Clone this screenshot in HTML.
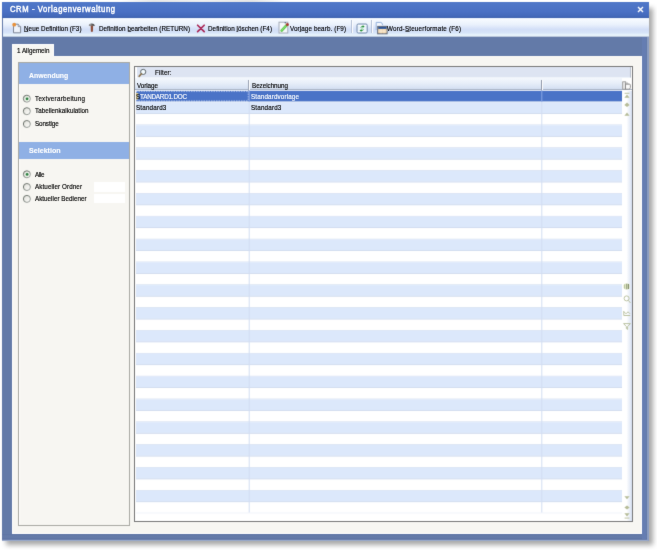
<!DOCTYPE html>
<html><head><meta charset="utf-8">
<style>
html,body{margin:0;padding:0;width:657px;height:550px;overflow:hidden;background:#fff;}
body{position:relative;font-family:"Liberation Sans",sans-serif;}
div,span,svg{position:absolute;box-sizing:border-box;}
.t{white-space:nowrap;font-size:7.3px;line-height:7px;color:#000;transform-origin:0 0;-webkit-text-stroke:.16px #000;}
.w{color:#fff;-webkit-text-stroke:.15px #fff;}
.u{position:static;}
.rb{width:8px;height:8px;border-radius:50%;border:1px solid #8c928c;background:linear-gradient(135deg,#dcdcd6,#f4f4f0 60%,#fff);}
.dot{width:3.2px;height:3.2px;border-radius:50%;background:#358a46;box-shadow:0 0 1px #8cc898;}
</style></head><body><svg width="0" height="0" style="position:absolute"><filter id="soft" x="0" y="0" width="100%" height="100%" color-interpolation-filters="sRGB"><feConvolveMatrix order="3" kernelMatrix="0.01 0.08 0.01 0.08 0.64 0.08 0.01 0.08 0.01" edgeMode="duplicate"/></filter><filter id="soft2" x="0" y="0" width="100%" height="100%" color-interpolation-filters="sRGB"><feConvolveMatrix order="3" kernelMatrix="0.005 0.05 0.005 0.05 0.78 0.05 0.005 0.05 0.005" edgeMode="duplicate"/></filter></svg><div id="root" style="left:0;top:0;width:657px;height:550px;filter:url(#soft);">

<!-- drop shadow -->
<div style="left:6px;top:7.5px;width:646.5px;height:537.5px;background:#606060;filter:blur(2.6px);opacity:.55"></div>
<div style="left:120px;top:0;width:166px;height:2px;background:linear-gradient(90deg,#fff,#e8e8e8 20%,#f0f0f0 50%,#e6e6e6 80%,#fff);"></div>

<!-- window frame -->
<div style="left:2px;top:2px;width:646.6px;height:539.4px;background:#637aa8;border-right:2px solid #8a9cc2;border-bottom:1.5px solid #9aaaca;"></div>
<div style="left:2px;top:534px;width:644.6px;height:6px;background:linear-gradient(#5c73a4,#657ba9 30%,#647aa8 65%,#5a70a2 85%,#7f92bb);"></div>
<div style="left:642.3px;top:37px;width:4px;height:502px;background:#657db2;"></div>

<!-- title bar -->
<div style="left:2px;top:2px;width:646.6px;height:16px;background:linear-gradient(#5078c8,#4a70c4 60%,#4469ba 88%,#3d60ac);"></div>
<svg style="left:637px;top:6px" width="7" height="7" viewBox="0 0 7 7"><path d="M1 1 L6 6 M6 1 L1 6" stroke="#fff" stroke-width="1.4"/></svg>

<!-- toolbar -->
<div style="left:3px;top:18px;width:645.6px;height:19.4px;background:linear-gradient(#e8f0fc 0%,#f6faff 8%,#eaf1fc 35%,#d2def7 60%,#d6e4f8 78%,#eaf6fc 90%,#e4eef8 96%,#6f80a8 100%);"></div>

<!-- toolbar icons -->
<svg style="left:12px;top:22px" width="10" height="12" viewBox="0 0 10 12">
  <path d="M1.5 2.2 H6.2 L8.6 4.6 V10.8 H1.5 Z" fill="#eef3fb" stroke="#7f8796" stroke-width="1"/>
  <path d="M6.2 2.2 V4.6 H8.6" fill="#dfe6f2" stroke="#7f8796" stroke-width=".8"/>
  <circle cx="2.2" cy="2.7" r="1.9" fill="#e8913a"/>
</svg>
<svg style="left:88px;top:22.8px" width="8" height="10" viewBox="0 0 8 10">
  <path d="M0.9 2.2 Q1.4 0.6 3.8 0.6 Q6.4 0.6 6.8 2.4 L6.6 3.1 Q4 2.5 0.9 2.8 Z" fill="#555"/>
  <path d="M0.9 2.2 Q1.4 0.8 3.4 0.8 L3.4 2.6 Q2 2.6 0.9 2.8 Z" fill="#9a9a9a"/>
  <path d="M2.7 2.8 H5.1 L4.9 8.6 Q3.9 9.4 2.9 8.6 Z" fill="#8c4c38"/>
</svg>
<svg style="left:196px;top:23.5px" width="10" height="9" viewBox="0 0 10 9">
  <path d="M1.6 1.2 L8.2 7.6 M8.2 1.2 L1.6 7.6" stroke="#a82050" stroke-width="1.6" stroke-linecap="round"/>
</svg>
<svg style="left:277.5px;top:21px" width="12" height="13" viewBox="0 0 12 13">
  <rect x="1" y="1.2" width="8.8" height="10.8" fill="#f6f8fc" stroke="#a4abb8" stroke-width="1"/>
  <path d="M3.6 9.6 L8.2 4.6" stroke="#62c850" stroke-width="2.6" stroke-linecap="round"/>
  <path d="M3.8 9.2 L7.8 4.8" stroke="#9ae888" stroke-width=".8" stroke-linecap="round"/>
  <circle cx="9.4" cy="3.4" r="1.5" fill="#a83a30"/>
  <circle cx="7.3" cy="1.7" r=".8" fill="#5a6488"/>
</svg>
<svg style="left:355.5px;top:22.5px" width="12" height="11" viewBox="0 0 12 11">
  <rect x="1" y="1" width="10.2" height="9" rx="1.3" fill="#eaf3fc" stroke="#7088aa" stroke-width="1"/>
  <rect x="2" y="2.2" width="8.2" height=".8" fill="#fff"/>
  <rect x="2" y="7.8" width="8.2" height=".8" fill="#fff"/>
  <path d="M4.2 5 Q5 3 6.8 3 L6.6 2 L8.6 3.6 L6.6 5 L6.7 4.1 Q5.6 4.1 4.2 5 Z" fill="#1a8a2a"/>
  <path d="M8 6 Q7.2 8 5.4 8 L5.6 9 L3.6 7.4 L5.6 6 L5.5 6.9 Q6.6 6.9 8 6 Z" fill="#1a8a2a"/>
  <path d="M5 5 L7.2 6" stroke="#9ae0a0" stroke-width=".8"/>
</svg>
<svg style="left:374.5px;top:20.5px" width="13" height="14" viewBox="0 0 13 14">
  <path d="M1.2 9 V1.4 H5.8 Q7.4 1.6 7.6 4.2" fill="#f4f8fe" stroke="#8aaad8" stroke-width=".9"/>
  <rect x="2.7" y="5.4" width="9.4" height="7.4" fill="#f2d6ac" stroke="#5e6676" stroke-width="1"/>
  <rect x="3.2" y="5.9" width="8.4" height="2" fill="#2c5598"/>
  <path d="M6 8 V12.4 M9 8 V12.4 M3.2 10.1 H11.6" stroke="#fbf4e8" stroke-width=".6"/>
</svg>

<!-- toolbar texts -->

<!-- separators -->
<div style="left:351.3px;top:20px;width:1px;height:13px;background:#b4c0d6;"></div>
<div style="left:352.3px;top:20px;width:1px;height:13px;background:#fff;"></div>
<div style="left:370.5px;top:20px;width:1px;height:13px;background:#b4c0d6;"></div>
<div style="left:371.5px;top:20px;width:1px;height:13px;background:#fff;"></div>

<!-- tab -->
<div style="left:12px;top:43.5px;width:42.3px;height:13.5px;background:#f8f7f3;border-top:1px solid #fff;border-left:1px solid #fff;border-right:1.2px solid #fff;"></div>

<!-- tab page -->
<div style="left:12px;top:56px;width:629.8px;height:477.5px;background:#f7f6f2;border-left:1px solid #fff;border-bottom:1px solid #fff;border-right:1px solid #fff;"></div>
<div style="left:54.3px;top:56px;width:586px;height:1px;background:#fcfaf6;"></div>

<!-- left panel -->
<div style="left:18px;top:62.2px;width:112.3px;height:463.9px;border:1.1px solid #a8a8a3;background:#f7f6f2;box-shadow:inset 1px 1px 0 #fff;"></div>
<div style="left:19.3px;top:63.2px;width:110px;height:21.1px;background:#8fb0e5;"></div>

<div style="left:19.3px;top:142.3px;width:110px;height:16.6px;background:#8fb0e5;"></div>

<!-- radios -->
<svg width="0" height="0" style="position:absolute"><defs><linearGradient id="rs" x1="0" y1="0" x2="1" y2="1"><stop offset="0" stop-color="#5a625a"/><stop offset="1" stop-color="#a8aca8"/></linearGradient><linearGradient id="rg" x1="0" y1="0" x2="1" y2="1"><stop offset="0" stop-color="#dcdcd6"/><stop offset=".6" stop-color="#f2f2ee"/><stop offset="1" stop-color="#fff"/></linearGradient></defs></svg>
<svg style="left:20px;top:92px" width="12" height="12" viewBox="0 0 12 12"><circle cx="6.85" cy="6.70" r="3.5" fill="url(#rg)" stroke="url(#rs)" stroke-width="1"/><circle cx="7.05" cy="6.80" r="2.2" fill="#e4f4e2"/><circle cx="7.05" cy="6.80" r="1.4" fill="#2f7e42"/></svg>
<svg style="left:20px;top:105px" width="12" height="12" viewBox="0 0 12 12"><circle cx="6.85" cy="6.20" r="3.5" fill="url(#rg)" stroke="url(#rs)" stroke-width="1"/></svg>
<svg style="left:20px;top:118px" width="12" height="12" viewBox="0 0 12 12"><circle cx="6.85" cy="6.00" r="3.5" fill="url(#rg)" stroke="url(#rs)" stroke-width="1"/></svg>

<svg style="left:20px;top:168px" width="12" height="12" viewBox="0 0 12 12"><circle cx="6.90" cy="6.30" r="3.5" fill="url(#rg)" stroke="url(#rs)" stroke-width="1"/><circle cx="7.10" cy="6.40" r="2.2" fill="#e4f4e2"/><circle cx="7.10" cy="6.40" r="1.4" fill="#2f7e42"/></svg>
<svg style="left:20px;top:181px" width="12" height="12" viewBox="0 0 12 12"><circle cx="6.90" cy="6.00" r="3.5" fill="url(#rg)" stroke="url(#rs)" stroke-width="1"/></svg>
<svg style="left:20px;top:192px" width="12" height="12" viewBox="0 0 12 12"><circle cx="6.90" cy="6.90" r="3.5" fill="url(#rg)" stroke="url(#rs)" stroke-width="1"/></svg>

<div style="left:93.5px;top:182.1px;width:31px;height:9.5px;background:#fff;"></div>
<div style="left:93.5px;top:194.4px;width:31px;height:9.1px;background:#fff;"></div>

<!-- grid outer -->
<div style="left:134px;top:66px;width:498.6px;height:455.6px;border:1px solid #777;background:#fff;"></div>
<!-- filter row -->
<div style="left:136.5px;top:67px;width:494px;height:11.4px;background:#dde4f2;border-right:1px solid #b8c0cc;border-bottom:1px solid #eef3fa;"></div>
<svg style="left:137px;top:68px" width="10" height="10" viewBox="0 0 10 10">
  <circle cx="6.2" cy="3.9" r="2.6" fill="#f4fcff" stroke="#50585e" stroke-width=".9"/>
  <path d="M4.4 5.8 L2.2 8.3" stroke="#8a7048" stroke-width="1.7" stroke-linecap="round"/>
</svg>
<!-- header -->
<div style="left:135px;top:78.4px;width:487px;height:12px;background:linear-gradient(#f4f8fd,#e8eff9 45%,#d3dff2);border-bottom:1px solid #a9b4c6;"></div>
<div style="left:622px;top:78.4px;width:9.6px;height:12px;background:#fff;border-bottom:1px solid #a9b4c6;"></div>
<div style="left:248.4px;top:80px;width:1px;height:10.5px;background:#9aa2b2;"></div>
<div style="left:249.4px;top:80px;width:1px;height:10.5px;background:#fff;"></div>
<div style="left:541.2px;top:80px;width:1px;height:10.5px;background:#9098a8;"></div>
<div style="left:542.2px;top:80px;width:1px;height:10.5px;background:#fff;"></div>
<!-- column chooser icon -->
<svg style="left:622px;top:80.5px" width="9" height="9" viewBox="0 0 9 9">
  <rect x=".7" y=".8" width="3" height="7.4" fill="#e8e8e8" stroke="#8c8c8c" stroke-width=".8"/>
  <path d="M3.5 3.2 H7.6 Q8.4 3.2 8.4 4.2 V6.6 Q8.4 8.2 6.6 8.2 H3.5 Z" fill="#fafafa" stroke="#7a7a7a" stroke-width=".8"/>
  <path d="M3.5 2.6 Q5 1.2 6.4 2.6" fill="none" stroke="#8a8a8a" stroke-width=".8"/>
</svg>
<!-- rows -->
<svg style="left:136px;top:90px" width="486" height="424" viewBox="0 0 486 424"><defs><clipPath id="rc"><rect x="0" y="0" width="486" height="423.30"/></clipPath></defs><g clip-path="url(#rc)"><rect x="0" y="11.72" width="486" height="0.7" fill="#cfdbef"/><rect x="0" y="12.42" width="486" height="10.72" fill="#dce8fb"/><rect x="0" y="23.14" width="486" height="0.7" fill="#c2d0e8"/><rect x="0" y="34.56" width="486" height="0.7" fill="#cfdbef"/><rect x="0" y="35.26" width="486" height="10.72" fill="#dce8fb"/><rect x="0" y="45.98" width="486" height="0.7" fill="#c2d0e8"/><rect x="0" y="57.40" width="486" height="0.7" fill="#cfdbef"/><rect x="0" y="58.10" width="486" height="10.72" fill="#dce8fb"/><rect x="0" y="68.82" width="486" height="0.7" fill="#c2d0e8"/><rect x="0" y="80.24" width="486" height="0.7" fill="#cfdbef"/><rect x="0" y="80.94" width="486" height="10.72" fill="#dce8fb"/><rect x="0" y="91.66" width="486" height="0.7" fill="#c2d0e8"/><rect x="0" y="103.08" width="486" height="0.7" fill="#cfdbef"/><rect x="0" y="103.78" width="486" height="10.72" fill="#dce8fb"/><rect x="0" y="114.50" width="486" height="0.7" fill="#c2d0e8"/><rect x="0" y="125.92" width="486" height="0.7" fill="#cfdbef"/><rect x="0" y="126.62" width="486" height="10.72" fill="#dce8fb"/><rect x="0" y="137.34" width="486" height="0.7" fill="#c2d0e8"/><rect x="0" y="148.76" width="486" height="0.7" fill="#cfdbef"/><rect x="0" y="149.46" width="486" height="10.72" fill="#dce8fb"/><rect x="0" y="160.18" width="486" height="0.7" fill="#c2d0e8"/><rect x="0" y="171.60" width="486" height="0.7" fill="#cfdbef"/><rect x="0" y="172.30" width="486" height="10.72" fill="#dce8fb"/><rect x="0" y="183.02" width="486" height="0.7" fill="#c2d0e8"/><rect x="0" y="194.44" width="486" height="0.7" fill="#cfdbef"/><rect x="0" y="195.14" width="486" height="10.72" fill="#dce8fb"/><rect x="0" y="205.86" width="486" height="0.7" fill="#c2d0e8"/><rect x="0" y="217.28" width="486" height="0.7" fill="#cfdbef"/><rect x="0" y="217.98" width="486" height="10.72" fill="#dce8fb"/><rect x="0" y="228.70" width="486" height="0.7" fill="#c2d0e8"/><rect x="0" y="240.12" width="486" height="0.7" fill="#cfdbef"/><rect x="0" y="240.82" width="486" height="10.72" fill="#dce8fb"/><rect x="0" y="251.54" width="486" height="0.7" fill="#c2d0e8"/><rect x="0" y="262.96" width="486" height="0.7" fill="#cfdbef"/><rect x="0" y="263.66" width="486" height="10.72" fill="#dce8fb"/><rect x="0" y="274.38" width="486" height="0.7" fill="#c2d0e8"/><rect x="0" y="285.80" width="486" height="0.7" fill="#cfdbef"/><rect x="0" y="286.50" width="486" height="10.72" fill="#dce8fb"/><rect x="0" y="297.22" width="486" height="0.7" fill="#c2d0e8"/><rect x="0" y="308.64" width="486" height="0.7" fill="#cfdbef"/><rect x="0" y="309.34" width="486" height="10.72" fill="#dce8fb"/><rect x="0" y="320.06" width="486" height="0.7" fill="#c2d0e8"/><rect x="0" y="331.48" width="486" height="0.7" fill="#cfdbef"/><rect x="0" y="332.18" width="486" height="10.72" fill="#dce8fb"/><rect x="0" y="342.90" width="486" height="0.7" fill="#c2d0e8"/><rect x="0" y="354.32" width="486" height="0.7" fill="#cfdbef"/><rect x="0" y="355.02" width="486" height="10.72" fill="#dce8fb"/><rect x="0" y="365.74" width="486" height="0.7" fill="#c2d0e8"/><rect x="0" y="377.16" width="486" height="0.7" fill="#cfdbef"/><rect x="0" y="377.86" width="486" height="10.72" fill="#dce8fb"/><rect x="0" y="388.58" width="486" height="0.7" fill="#c2d0e8"/><rect x="0" y="400.00" width="486" height="0.7" fill="#cfdbef"/><rect x="0" y="400.70" width="486" height="10.72" fill="#dce8fb"/><rect x="0" y="411.42" width="486" height="0.7" fill="#c2d0e8"/><rect x="0" y="422.84" width="486" height="0.7" fill="#cfdbef"/><rect x="112.7" y="0" width="1" height="422.5" fill="#d2ddf2"/><rect x="405.3" y="0" width="1" height="422.5" fill="#d2ddf2"/></g></svg>
<!-- selected -->
<svg style="left:136px;top:90px" width="486" height="12" viewBox="0 0 486 12">
  <rect x="0" y="0.8" width="486" height="10.6" fill="#4a73c7"/>
  <rect x="112.7" y="0.8" width="1" height="10.6" fill="#88a6e6"/>
  <rect x="405.3" y="0.8" width="1" height="10.6" fill="#88a6e6"/>
  <line x1="0" y1="1.1" x2="112.5" y2="1.1" stroke="#fff" stroke-opacity=".9" stroke-width=".8" stroke-dasharray="1.5 1"/>
  <line x1="0" y1="11" x2="112.5" y2="11" stroke="#fff" stroke-opacity=".8" stroke-width=".8" stroke-dasharray="1.5 1"/>
  <line x1="0.4" y1="1" x2="0.4" y2="11" stroke="#fff" stroke-opacity=".7" stroke-width=".8" stroke-dasharray="1.5 1"/>
  <line x1="112.2" y1="1" x2="112.2" y2="11" stroke="#fff" stroke-opacity=".6" stroke-width=".8" stroke-dasharray="1.5 1"/>
  <rect x="0" y="3" width="2.3" height="6.6" fill="#d8c890"/>
</svg>
<!-- nav column -->
<div style="left:622px;top:91px;width:9.6px;height:430px;background:linear-gradient(90deg,#fff 45%,#d6e0f2);"></div>

<!-- nav icons -->
<svg style="left:622px;top:92px" width="10" height="26" viewBox="0 0 10 26">
  <g fill="#b6bc98">
    <rect x="2.6" y=".8" width="4.8" height=".9"/>
    <path d="M5 2.4 L7.6 5.8 H2.4 Z"/>
    <path d="M5 10.6 L7.6 12.9 L5 15 L2.4 12.9 Z"/>
    <path d="M5 20.4 L7.6 23.8 H2.4 Z"/>
  </g>
</svg>
<svg style="left:622px;top:282.5px" width="10" height="48" viewBox="0 0 10 48">
  <g fill="none" stroke="#b4bc98" stroke-width=".9">
    </g><rect x="1.8" y=".6" width="5.8" height="5.8" rx="2" fill="#dfe6c4"/><path d="M4.8 .8 V6.2 M6.5 1 V6" stroke="#6f7a58" stroke-width=".8"/><path d="M2.4 1.5 V5.5" stroke="#b8c29a" stroke-width="1"/><g fill="none" stroke="#b4bc98" stroke-width=".9">
    <circle cx="4.6" cy="15.4" r="2.5"/>
    <path d="M6.4 17.4 L8.5 20"/>
    <path d="M1.8 28 V32.5 H8.2 M2 28.8 L4 30.8 L6 28.8 L8 30.8"/>
    <path d="M1.6 40.6 H8.4 L5.6 43.6 V46.4 L4.4 45.6 V43.6 Z"/>
  </g>
</svg>
<svg style="left:622px;top:495px" width="10" height="25" viewBox="0 0 10 25">
  <g fill="#b6bc98">
    <path d="M5 4.2 L7.6 1.2 H2.4 Z"/>
    <path d="M5 10.4 L7.6 12.5 L5 14.5 L2.4 12.5 Z"/>
    <path d="M5 21.4 L7.6 18.2 H2.4 Z"/>
    <rect x="2.6" y="22.6" width="4.8" height=".9"/>
  </g>
</svg>

</div>
<div id="txt" style="left:0;top:0;width:657px;height:550px;filter:url(#soft2);">
<svg style="left:0;top:30px" width="657" height="3" viewBox="0 30 657 3">
<g fill="#000" fill-opacity=".85"><rect x="24" y="31.1" width="4.2" height=".75"/><rect x="127.8" y="31.1" width="3.4" height=".75"/><rect x="236.4" y="31.1" width="1.8" height=".75"/><rect x="299.4" y="31.1" width="1.8" height=".75"/><rect x="405.4" y="31.1" width="4.2" height=".75"/></g></svg>
<span class="t w" style="left:10.3px;top:5.1px;font-size:8.5px;line-height:8.5px;-webkit-text-stroke:.45px #fff;transform:scaleX(.9);letter-spacing:0.655px">CRM - Vorlagenverwaltung</span>
<span class="t" style="left:23.9px;top:24.5px;transform:scaleX(0.86);letter-spacing:0.082px"><span class="u">N</span>eue Definition (F3)</span>
<span class="t" style="left:99.2px;top:24.5px;transform:scaleX(0.86);letter-spacing:0.054px">Definition <span class="u">b</span>earbeiten (RETURN)</span>
<span class="t" style="left:208px;top:24.5px;transform:scaleX(0.86);letter-spacing:0.064px">Definition <span class="u">l</span>öschen (F4)</span>
<span class="t" style="left:289.8px;top:24.5px;transform:scaleX(0.86);letter-spacing:0.125px">Vor<span class="u">l</span>age bearb. (F9)</span>
<span class="t" style="left:387.4px;top:24.5px;transform:scaleX(0.86);letter-spacing:0.212px">Word-<span class="u">S</span>teuerformate (F6)</span>
<span class="t" style="left:16.7px;top:46.8px;transform:scaleX(0.86);letter-spacing:0.006px">1 Allgemein</span>
<span class="t w" style="left:28.9px;top:72.2px;font-weight:bold;-webkit-text-stroke:.12px #fff;transform:scaleX(.94)">Anwendung</span>
<span class="t w" style="left:28.7px;top:147.3px;font-weight:bold;-webkit-text-stroke:.12px #fff;transform:scaleX(.975)">Selektion</span>
<span class="t" style="left:35.1px;top:94.8px;transform:scaleX(0.86);letter-spacing:0.279px">Textverarbeitung</span>
<span class="t" style="left:35.1px;top:107.2px;transform:scaleX(0.86);letter-spacing:0.036px">Tabellenkalkulation</span>
<span class="t" style="left:35.1px;top:119.9px;transform:scaleX(0.86);letter-spacing:-0.121px">Sonstige</span>
<span class="t" style="left:34.7px;top:170.9px;transform:scaleX(0.86);letter-spacing:-0.375px">Alle</span>
<span class="t" style="left:34.7px;top:183.2px;transform:scaleX(0.86);letter-spacing:0.101px">Aktueller Ordner</span>
<span class="t" style="left:34.7px;top:195.1px;transform:scaleX(0.86);letter-spacing:0.014px">Aktueller Bediener</span>
<span class="t" style="left:155.1px;top:69.2px;transform:scaleX(0.86);letter-spacing:0.156px">Filter:</span>
<span class="t" style="left:137.3px;top:82.2px;transform:scaleX(0.86);letter-spacing:-0.055px">Vorlage</span>
<span class="t" style="left:252.1px;top:82.2px;transform:scaleX(0.86);letter-spacing:-0.034px">Bezeichnung</span>
<span class="t w" style="left:136.1px;top:92.9px;transform:scaleX(0.86);letter-spacing:-0.217px"><span style="position:static;color:#222;-webkit-text-stroke:.2px #222">S</span>TANDARD1.DOC</span>
<span class="t w" style="left:250.5px;top:93.1px;transform:scaleX(0.86);letter-spacing:0.161px">Standardvorlage</span>
<span class="t" style="left:135.8px;top:104.1px;transform:scaleX(0.86);letter-spacing:0.193px">Standard3</span>
<span class="t" style="left:250.5px;top:104.1px;transform:scaleX(0.86);letter-spacing:0.193px">Standard3</span>
</div></body></html>
